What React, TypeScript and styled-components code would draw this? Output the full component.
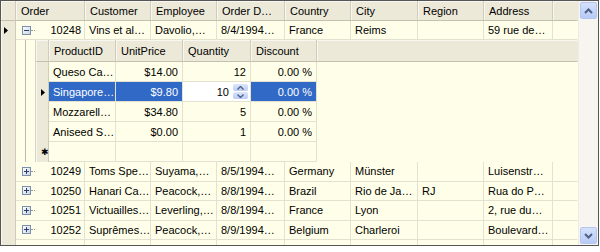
import React, { FC } from "react";
import styled, { createGlobalStyle } from "styled-components";

const GlobalStyle = createGlobalStyle`
    body {
        margin: 0;
        background: #ffffff;
        font-family: "Liberation Sans", Arial, sans-serif;
        font-size: 11px;
        color: #000000;
    }
`;

const Colors = {
    header: "#ECE9D8",
    headerLine: "#CFCCBB",
    cell: "#FFFFE9",
    gridLine: "#E3E1D0",
    select: "#3169C6",
    border: "#555555",
};

const MAIN_COLS = "15px 69px 66px 66px 68px 66px 67px 66px 69px 1fr";
const CHILD_COLS = "13px 67px 67px 68px 66px 1fr";

type Order = {
    id: string;
    customer: string;
    employee: string;
    date: string;
    country: string;
    city: string;
    region: string;
    address: string;
};

const orders: Order[] = [
    { id: "10249", customer: "Toms Spe…", employee: "Suyama,…", date: "8/5/1994…", country: "Germany", city: "Münster", region: "", address: "Luisenstr…" },
    { id: "10250", customer: "Hanari Ca…", employee: "Peacock,…", date: "8/8/1994…", country: "Brazil", city: "Rio de Ja…", region: "RJ", address: "Rua do P…" },
    { id: "10251", customer: "Victuailles…", employee: "Leverling,…", date: "8/8/1994…", country: "France", city: "Lyon", region: "", address: "2, rue du…" },
    { id: "10252", customer: "Suprêmes…", employee: "Peacock,…", date: "8/9/1994…", country: "Belgium", city: "Charleroi", region: "", address: "Boulevard…" },
    { id: "10253", customer: "Hanari Ca…", employee: "Leverling,…", date: "8/10/1994…", country: "Brazil", city: "Rio de Ja…", region: "RJ", address: "Rua do P…" },
];

const details = [
    { product: "Queso Ca…", price: "$14.00", qty: "12", discount: "0.00 %" },
    { product: "Singapore…", price: "$9.80", qty: "10", discount: "0.00 %", selected: true },
    { product: "Mozzarell…", price: "$34.80", qty: "5", discount: "0.00 %" },
    { product: "Aniseed S…", price: "$0.00", qty: "1", discount: "0.00 %" },
];

const RowArrow: FC = () => (
    <svg width="4" height="7" viewBox="0 0 4 7">
        <path d="M0 0 L4 3.5 L0 7 Z" fill="#000" />
    </svg>
);

const Expander: FC<{ open?: boolean }> = ({ open }) => (
    <ExpanderBox>
        <svg width="9" height="9" viewBox="0 0 9 9">
            <defs>
                <linearGradient id={open ? "exo" : "exc"} x1="0" y1="0" x2="1" y2="1">
                    <stop offset="0" stopColor="#ffffff" />
                    <stop offset="1" stopColor="#C9D3E2" />
                </linearGradient>
            </defs>
            <rect x="0.5" y="0.5" width="8" height="8" fill={`url(#${open ? "exo" : "exc"})`} stroke="#7A90AC" />
            <path d="M2 4.5 H7" stroke="#2A3F6C" strokeWidth="1" />
            {!open && <path d="M4.5 2 V7" stroke="#2A3F6C" strokeWidth="1" />}
        </svg>
        <Connector />
    </ExpanderBox>
);

const App: FC = () => {
    return (
        <>
            <GlobalStyle />
            <GridFrame>
                <Body>
                    <Row $height={20}>
                        <HeadCell $rowHeader />
                        <HeadCell>Order</HeadCell>
                        <HeadCell>Customer</HeadCell>
                        <HeadCell>Employee</HeadCell>
                        <HeadCell>Order D…</HeadCell>
                        <HeadCell>Country</HeadCell>
                        <HeadCell>City</HeadCell>
                        <HeadCell>Region</HeadCell>
                        <HeadCell>Address</HeadCell>
                        <HeadCell $filler />
                    </Row>

                    <Row $height={19}>
                        <RowHeader><RowArrow /></RowHeader>
                        <OrderCell>
                            <Expander open />
                            <span>10248</span>
                        </OrderCell>
                        <Cell>Vins et al…</Cell>
                        <Cell>Davolio,…</Cell>
                        <Cell>8/4/1994…</Cell>
                        <Cell>France</Cell>
                        <Cell>Reims</Cell>
                        <Cell></Cell>
                        <Cell>59 rue de…</Cell>
                        <Cell $filler />
                    </Row>

                    <Detail>
                        <RowHeader />
                        <TreeGutter />
                        <ChildGrid>
                            <ChildRow $height={22}>
                                <HeadCell $rowHeader />
                                <HeadCell>ProductID</HeadCell>
                                <HeadCell>UnitPrice</HeadCell>
                                <HeadCell>Quantity</HeadCell>
                                <HeadCell>Discount</HeadCell>
                                <HeadCell $filler />
                            </ChildRow>
                            {details.map((d) => (
                                <ChildRow key={d.product} $height={20}>
                                    <RowHeader $child>{d.selected && <RowArrow />}</RowHeader>
                                    <Cell $selected={d.selected}>{d.product}</Cell>
                                    <Cell $selected={d.selected} $right>{d.price}</Cell>
                                    {d.selected ? (
                                        <EditCell>
                                            <span>{d.qty}</span>
                                            <Spinner>
                                                <SpinButton>
                                                    <svg width="7" height="4" viewBox="0 0 7 4">
                                                        <path d="M0.5 3.5 L3.5 0.5 L6.5 3.5" fill="none" stroke="#4D6185" strokeWidth="1.4" />
                                                    </svg>
                                                </SpinButton>
                                                <SpinButton>
                                                    <svg width="7" height="4" viewBox="0 0 7 4">
                                                        <path d="M0.5 0.5 L3.5 3.5 L6.5 0.5" fill="none" stroke="#4D6185" strokeWidth="1.4" />
                                                    </svg>
                                                </SpinButton>
                                            </Spinner>
                                        </EditCell>
                                    ) : (
                                        <Cell $right>{d.qty}</Cell>
                                    )}
                                    <Cell $selected={d.selected} $right>{d.discount}</Cell>
                                    <BlankCell />
                                </ChildRow>
                            ))}
                            <ChildRow $height={20}>
                                <RowHeader $child><NewRowMark>✱</NewRowMark></RowHeader>
                                <Cell />
                                <Cell />
                                <Cell />
                                <Cell />
                                <BlankCell />
                            </ChildRow>
                        </ChildGrid>
                    </Detail>

                    {orders.map((o) => (
                        <Row key={o.id} $height={19.5}>
                            <RowHeader />
                            <OrderCell>
                                <Expander />
                                <span>{o.id}</span>
                            </OrderCell>
                            <Cell>{o.customer}</Cell>
                            <Cell>{o.employee}</Cell>
                            <Cell>{o.date}</Cell>
                            <Cell>{o.country}</Cell>
                            <Cell>{o.city}</Cell>
                            <Cell>{o.region}</Cell>
                            <Cell>{o.address}</Cell>
                            <Cell $filler />
                        </Row>
                    ))}
                </Body>

                <ScrollBar>
                    <ScrollButton>
                        <svg width="9" height="6" viewBox="0 0 9 6">
                            <path d="M1 5 L4.5 1.5 L8 5" fill="none" stroke="#4D6185" strokeWidth="2" />
                        </svg>
                    </ScrollButton>
                    <Track />
                    <ScrollButton>
                        <svg width="9" height="6" viewBox="0 0 9 6">
                            <path d="M1 1 L4.5 4.5 L8 1" fill="none" stroke="#4D6185" strokeWidth="2" />
                        </svg>
                    </ScrollButton>
                </ScrollBar>
            </GridFrame>
        </>
    );
};

export default App;

const GridFrame = styled.div`
    display: flex;
    width: 599px;
    height: 246px;
    box-sizing: border-box;
    border: 1px solid ${Colors.border};
    background: ${Colors.cell};
    overflow: hidden;
`;

const Body = styled.div`
    flex: 1;
    display: flex;
    flex-direction: column;
    overflow: hidden;
`;

const Row = styled.div<{ $height: number }>`
    display: grid;
    grid-template-columns: ${MAIN_COLS};
    height: ${(p) => p.$height}px;
    flex-shrink: 0;
`;

const ChildRow = styled.div<{ $height: number }>`
    display: grid;
    grid-template-columns: ${CHILD_COLS};
    height: ${(p) => p.$height}px;
    flex-shrink: 0;
`;

const Cell = styled.div<{ $right?: boolean; $selected?: boolean; $filler?: boolean }>`
    display: flex;
    align-items: center;
    justify-content: ${(p) => (p.$right ? "flex-end" : "flex-start")};
    padding: 0 4px 0 4px;
    box-sizing: border-box;
    white-space: nowrap;
    overflow: hidden;
    background: ${(p) => (p.$selected ? Colors.select : Colors.cell)};
    color: ${(p) => (p.$selected ? "#ffffff" : "#000000")};
    border-right: 1px solid ${(p) => (p.$filler ? "transparent" : Colors.gridLine)};
    border-bottom: 1px solid ${Colors.gridLine};
`;

const BlankCell = styled.div`
    background: ${Colors.cell};
`;

const OrderCell = styled(Cell)`
    justify-content: space-between;
    padding-left: 6px;
    padding-right: 3px;
`;

const HeadCell = styled.div<{ $rowHeader?: boolean; $filler?: boolean }>`
    display: flex;
    align-items: center;
    padding-left: 5px;
    box-sizing: border-box;
    white-space: nowrap;
    overflow: hidden;
    background: ${Colors.header};
    border-right: 1px solid ${(p) => (p.$filler ? "transparent" : Colors.headerLine)};
    border-bottom: 1px solid #C4C1B0;
    box-shadow: inset 1px 1px 0 #F8F7F1;
    color: #000;
`;

const RowHeader = styled.div<{ $child?: boolean }>`
    display: flex;
    align-items: center;
    padding-left: ${(p) => (p.$child ? 5 : 3)}px;
    box-sizing: border-box;
    background: ${Colors.header};
    border-right: 1px solid ${Colors.headerLine};
    box-shadow: inset 1px 0 0 #F8F7F1;
`;

const ExpanderBox = styled.div`
    display: flex;
    align-items: center;

    svg {
        display: block;
    }
`;

const Connector = styled.div`
    width: 4px;
    border-top: 1px dotted #9A9A9A;
`;

const Detail = styled.div`
    display: grid;
    grid-template-columns: 15px 19px 1fr;
    height: 122px;
    flex-shrink: 0;
`;

const TreeGutter = styled.div`
    background: linear-gradient(to right, transparent 9px, #B9B9B9 9px, #B9B9B9 10px, transparent 10px) ${Colors.cell};
    background-repeat: no-repeat;
    border-bottom: 1px solid ${Colors.gridLine};
`;

const ChildGrid = styled.div`
    display: flex;
    flex-direction: column;
    border-left: 1px solid #D6D3C2;
    border-bottom: 1px solid ${Colors.gridLine};
`;

const EditCell = styled.div`
    display: flex;
    align-items: center;
    justify-content: flex-end;
    gap: 4px;
    padding-right: 2px;
    box-sizing: border-box;
    background: #ffffff;
    border-right: 1px solid ${Colors.gridLine};
    border-bottom: 1px solid ${Colors.gridLine};
`;

const Spinner = styled.div`
    display: flex;
    flex-direction: column;
    gap: 1px;
`;

const SpinButton = styled.div`
    width: 15px;
    height: 7px;
    display: flex;
    align-items: center;
    justify-content: center;
    background: linear-gradient(#DCE6FD, #BACBF6);
    border-radius: 2px;
`;

const NewRowMark = styled.span`
    font-size: 9px;
    line-height: 1;
`;

const ScrollBar = styled.div`
    width: 20px;
    display: flex;
    flex-direction: column;
    padding: 1px;
    box-sizing: border-box;
    background: #F6F5F0;
    border-left: 1px solid #EEEDE5;
`;

const ScrollButton = styled.div`
    height: 17px;
    display: flex;
    align-items: center;
    justify-content: center;
    background: linear-gradient(#D5E1FC, #B8CAF6);
    border: 1px solid #B5C7F1;
    border-radius: 2px;
    box-sizing: border-box;
`;

const Track = styled.div`
    flex: 1;
`;
